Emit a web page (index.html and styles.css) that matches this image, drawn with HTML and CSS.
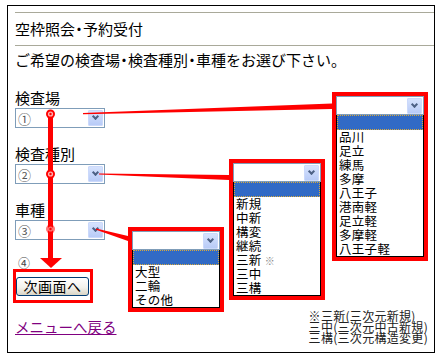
FILE: index.html
```html
<!DOCTYPE html>
<html lang="ja">
<head>
    <meta charset="UTF-8">
    <title>空枠照会・予約受付</title>
    <link rel="stylesheet" href="styles.css">
</head>
<body>
    <div class="frame">
        <h1 class="title">空枠照会<span class="dot">・</span>予約受付</h1>
        <p class="lead">ご希望の検査場<span class="dot">・</span>検査種別<span class="dot">・</span>車種をお選び下さい。</p>

        <div class="field">
            <div class="label">検査場</div>
            <div class="select"><span class="num">①</span><span class="drop"></span></div>
        </div>
        <div class="field">
            <div class="label">検査種別</div>
            <div class="select"><span class="num">②</span><span class="drop"></span></div>
        </div>
        <div class="field">
            <div class="label">車種</div>
            <div class="select"><span class="num">③</span><span class="drop"></span></div>
        </div>

        <div class="step">④</div>
        <div class="next-box"><button class="next">次画面へ</button></div>

        <div class="footer">
            <a href="#" class="back">メニューへ戻る</a>
            <div class="note">
                <div>※三新(三次元新規)</div>
                <div>三中(三次元中古新規)</div>
                <div>三構(三次元構造変更)</div>
            </div>
        </div>
    </div>

    <!-- red annotation marks -->
    <svg class="marks" width="443" height="357" viewBox="0 0 443 357">
        <polygon points="83,113 332,103.5 332,109 83,114.2" fill="#f00"/>
        <polygon points="99,173.5 229,175 229,180 99,174.6" fill="#f00"/>
        <polygon points="96,228.6 128,236 128,241 96,229.8" fill="#f00"/>
        <rect x="48" y="114" width="5" height="145" fill="#f00"/>
        <polygon points="40,258 62,258 51,268" fill="#f00"/>
        <g>
            <circle cx="50.5" cy="114" r="4.5" fill="#f00"/>
            <circle cx="50.5" cy="114" r="2.6" fill="#ffb0b0"/>
            <circle cx="50.5" cy="114" r="1.2" fill="#f00"/>
        </g>
        <g>
            <circle cx="50.5" cy="174" r="4.5" fill="#f00"/>
            <circle cx="50.5" cy="174" r="2.6" fill="#ffb0b0"/>
            <circle cx="50.5" cy="174" r="1.2" fill="#f00"/>
        </g>
        <g opacity="0.55">
            <circle cx="50.5" cy="229" r="4.5" fill="#f00"/>
            <circle cx="50.5" cy="229" r="2.6" fill="#ffd0d0"/>
            <circle cx="50.5" cy="229" r="1.2" fill="#f00"/>
        </g>
    </svg>

    <div class="popup popup-place">
        <div class="select small"><span class="drop"></span></div>
        <ul class="options">
            <li class="picked"></li>
            <li>品川</li>
            <li>足立</li>
            <li>練馬</li>
            <li>多摩</li>
            <li>八王子</li>
            <li>港南軽</li>
            <li>足立軽</li>
            <li>多摩軽</li>
            <li>八王子軽</li>
        </ul>
    </div>

    <div class="popup popup-kind">
        <div class="select small"><span class="drop"></span></div>
        <ul class="options">
            <li class="picked"></li>
            <li>新規</li>
            <li>中新</li>
            <li>構変</li>
            <li>継続</li>
            <li>三新 <span class="mark">※</span></li>
            <li>三中</li>
            <li>三構</li>
        </ul>
    </div>

    <div class="popup popup-car">
        <div class="select small"><span class="drop"></span></div>
        <ul class="options">
            <li class="picked"></li>
            <li>大型</li>
            <li>二輪</li>
            <li>その他</li>
        </ul>
    </div>
</body>
</html>
```

FILE: styles.css
```css
body {
    margin: 0;
    position: relative;
    width: 443px;
    height: 357px;
    overflow: hidden;
    background: #fff;
    color: #000;
    font-family: "Noto Sans CJK JP", "Noto Sans", sans-serif;
}
.frame {
    box-sizing: border-box;
    width: 428px;
    height: 348px;
    margin: 5px 0 0 7px;
    border: 1px solid #000;
    padding: 6px 0 0 7px;
}
.title {
    margin: 0;
    font-size: 15px;
    font-weight: normal;
    line-height: 32px;
    border-top: 1px solid #a9a99a;
    border-bottom: 1px solid #a9a99a;
}
.dot {
    margin: 0 -3.5px;
}
.lead {
    margin: 4px 0 0;
    font-size: 15px;
    line-height: 20px;
}
.field {
    margin-top: 20px;
}
.field + .field {
    margin-top: 18px;
}
.label {
    font-size: 15px;
    line-height: 16px;
}
.select {
    box-sizing: border-box;
    width: 90px;
    height: 20px;
    margin-top: 2px;
    border: 1px solid #7f9db9;
    background: #fff;
    display: flex;
    align-items: center;
    justify-content: space-between;
}
.num {
    padding-left: 2px;
    font-size: 13px;
    line-height: 1;
    color: #555;
}
.drop {
    box-sizing: border-box;
    position: relative;
    width: 15px;
    height: 16px;
    margin: 0 1px 0 auto;
    border: 1px solid #cbd9fb;
    border-radius: 1px;
    background: linear-gradient(#d6e2fd, #b8cbf7);
}
.drop::after {
    content: "";
    position: absolute;
    left: 4px;
    top: 3px;
    width: 3px;
    height: 3px;
    border-right: 2px solid #4d6185;
    border-bottom: 2px solid #4d6185;
    transform: rotate(45deg);
}
.step {
    margin-top: 16px;
    padding-left: 3px;
    font-size: 12px;
    line-height: 13px;
    color: #444;
}
.next-box {
    display: flex;
    width: max-content;
    margin-left: -2px;
    border: 3px solid #f00;
    padding: 5px 1px 4px 0;
}
.next {
    box-sizing: border-box;
    width: 73px;
    height: 19px;
    padding: 0;
    border: 1px solid #003c74;
    border-radius: 3px;
    background: linear-gradient(#fff, #f3f2ec 55%, #d9d5c6);
    font: 14px/17px "Noto Sans CJK JP", sans-serif;
    letter-spacing: 0.5px;
    color: #000;
}
.footer {
    margin-top: 7px;
    padding-right: 6px;
    display: flex;
    justify-content: space-between;
    align-items: center;
}
.back {
    color: #800080;
    font-size: 14.5px;
    line-height: 16px;
}
.note {
    font-size: 12px;
    line-height: 11px;
    letter-spacing: 0.3px;
    color: #222;
}
.marks {
    position: absolute;
    left: 0;
    top: 0;
    z-index: 1;
    pointer-events: none;
}
.popup {
    position: absolute;
    z-index: 2;
    width: 88px;
    border: 4px solid #f00;
    background: #fff;
}
.popup-place {
    left: 332px;
    top: 92px;
}
.popup-kind {
    left: 229px;
    top: 159px;
}
.popup-car {
    left: 128px;
    top: 227px;
}
.select.small {
    width: 88px;
    height: 19px;
    margin: 0;
}
.options {
    list-style: none;
    margin: 0;
    padding: 0;
    border: 1px solid #000;
    border-top: 0;
}
.options li {
    height: 14px;
    padding-left: 2px;
    font-size: 12.5px;
    line-height: 14px;
    letter-spacing: 0.3px;
}
.options .picked {
    box-sizing: border-box;
    height: 15px;
    background: #316ac5;
    border: 1px dotted #d9a93b;
}
.mark {
    font-size: 10px;
    color: #888;
}
```
